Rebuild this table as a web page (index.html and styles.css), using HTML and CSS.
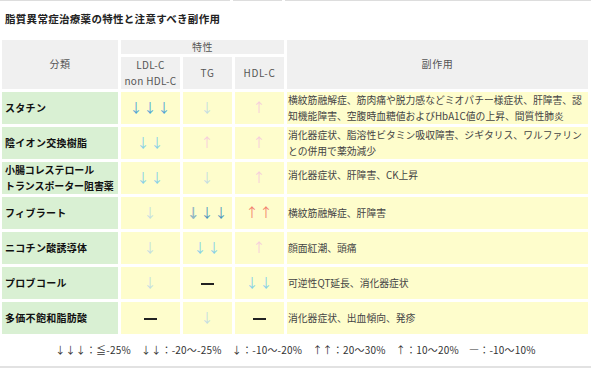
FILE: index.html
```html
<!DOCTYPE html>
<html lang="ja">
<head>
<meta charset="utf-8">
<link rel="stylesheet" href="styles.css">
</head>
<body>
<div class="prev">
  <span class="p1"></span><span class="p2"></span><span class="p3"></span>
</div>
<h1 class="title">脂質異常症治療薬の特性と注意すべき副作用</h1>
<table class="tbl">
  <colgroup>
    <col class="c1"><col class="c2"><col class="c3"><col class="c4"><col class="c5">
  </colgroup>
  <thead>
    <tr class="h1">
      <th rowspan="2">分類</th>
      <th colspan="3">特性</th>
      <th rowspan="2">副作用</th>
    </tr>
    <tr class="h2">
      <th class="two">LDL-C<br>non HDL-C</th>
      <th>TG</th>
      <th>HDL-C</th>
    </tr>
  </thead>
  <tbody>
    <tr>
      <td class="name">スタチン</td>
      <td class="v"><span class="a d3">↓↓↓</span></td>
      <td class="v"><span class="a d1">↓</span></td>
      <td class="v"><span class="a u1">↑</span></td>
      <td class="fx">横紋筋融解症、筋肉痛や脱力感などミオパチー様症状、肝障害、認知機能障害、空腹時血糖値およびHbA1C値の上昇、間質性肺炎</td>
    </tr>
    <tr>
      <td class="name">陰イオン交換樹脂</td>
      <td class="v"><span class="a d2">↓↓</span></td>
      <td class="v"><span class="a u1">↑</span></td>
      <td class="v"><span class="a u1">↑</span></td>
      <td class="fx">消化器症状、脂溶性ビタミン吸収障害、ジギタリス、ワルファリンとの併用で薬効減少</td>
    </tr>
    <tr>
      <td class="name two">小腸コレステロール<br>トランスポーター阻害薬</td>
      <td class="v"><span class="a d2">↓↓</span></td>
      <td class="v"><span class="a d1">↓</span></td>
      <td class="v"><span class="a u1">↑</span></td>
      <td class="fx top">消化器症状、肝障害、CK上昇</td>
    </tr>
    <tr>
      <td class="name">フィブラート</td>
      <td class="v"><span class="a d1">↓</span></td>
      <td class="v"><span class="a d3b"><span class="thick">↓</span>↓↓</span></td>
      <td class="v"><span class="a u2">↑↑</span></td>
      <td class="fx">横紋筋融解症、肝障害</td>
    </tr>
    <tr>
      <td class="name">ニコチン酸誘導体</td>
      <td class="v"><span class="a d1">↓</span></td>
      <td class="v"><span class="a d2">↓↓</span></td>
      <td class="v"><span class="a u1">↑</span></td>
      <td class="fx">顔面紅潮、頭痛</td>
    </tr>
    <tr>
      <td class="name">プロブコール</td>
      <td class="v"><span class="a d1">↓</span></td>
      <td class="v"><span class="dash"></span></td>
      <td class="v"><span class="a d2">↓↓</span></td>
      <td class="fx">可逆性QT延長、消化器症状</td>
    </tr>
    <tr>
      <td class="name">多価不飽和脂肪酸</td>
      <td class="v"><span class="dash"></span></td>
      <td class="v"><span class="a d1">↓</span></td>
      <td class="v"><span class="dash"></span></td>
      <td class="fx">消化器症状、出血傾向、発疹</td>
    </tr>
  </tbody>
</table>
<p class="legend">↓↓↓：≦-25%　↓↓：-20〜-25%　↓：-10〜-20%　↑↑：20〜30%　↑：10〜20%　―：-10〜10%</p>
<div class="bottom"></div>
</body>
</html>
```

FILE: styles.css
```css
html, body {
  margin: 0;
  padding: 0;
  background: #ffffff;
}
body {
  width: 591px;
  height: 368px;
  overflow: hidden;
  position: relative;
  font-family: "Noto Sans CJK JP", "Noto Sans", sans-serif;
  color: #333;
}
.prev {
  display: flex;
  height: 1px;
  gap: 3px;
}
.prev span {
  background: #dddddd;
  height: 1px;
}
.p1 { width: 230px; }
.p2 { width: 49px; }
.p3 { flex: 1; }
.title {
  margin: 10px 0 0 5px;
  font-size: 10.5px;
  line-height: 16px;
  font-weight: bold;
  color: #222;
  letter-spacing: 0.3px;
}
.tbl {
  margin: 9.5px 0 0 -1px;
  border-collapse: separate;
  border-spacing: 3px 3.5px;
  table-layout: fixed;
  width: 592px;
  font-size: 10px;
}
.c1 { width: 116px; }
.c2 { width: 59px; }
.c3 { width: 49px; }
.c4 { width: 49px; }
.c5 { width: 301px; }
.tbl th {
  background: #f0f0f0;
  color: #555;
  font-weight: normal;
  font-size: 10px;
  padding: 0;
  text-align: center;
  vertical-align: middle;
  letter-spacing: 0.6px;
}
.h1 th { height: 14px; line-height: 14px; }
.h2 th { height: 31px; line-height: 16px; }
.h2 th.two { letter-spacing: 0.3px; }
.tbl td {
  height: 32px;
  padding: 0;
  vertical-align: middle;
  overflow: hidden;
}
.tbl td.name {
  background: #d9f0d3;
  color: #111;
  font-weight: bold;
  font-size: 10px;
  padding-left: 3px;
  line-height: 16px;
  letter-spacing: 0.3px;
  white-space: nowrap;
}
.tbl td.name.two { letter-spacing: -0.1px; }
.v {
  background: #fefdcc;
  text-align: center;
}
.tbl td.fx {
  background: #fefdcc;
  color: #444;
  font-size: 9.8px;
  line-height: 16px;
  padding-left: 1px;
}
.tbl td.fx.top {
  vertical-align: top;
  padding-top: 5px;
  height: 27px;
}
.a {
  font-family: "Noto Sans CJK JP", sans-serif;
  font-size: 13px;
  line-height: 14px;
  letter-spacing: 1px;
}
.d3 { color: #4ea4d6; }
.d3b { color: #4b93bf; }
.d3b .thick { color: #8fb7c4; text-shadow: 0.6px 0 0 #8fb7c4; }
.d2 { color: #86d0e8; }
.d1 { color: #c4dde2; }
.u1 { color: #f6cfdc; }
.u2 { color: #f3806e; }
.dash {
  display: inline-block;
  width: 13px;
  height: 2px;
  background: #222;
  vertical-align: middle;
}
.legend {
  margin: 6px 0 0 0;
  text-align: center;
  font-size: 10px;
  line-height: 14px;
  color: #333;
  letter-spacing: 0.2px;
}
.bottom {
  position: absolute;
  left: 0;
  right: 0;
  top: 366px;
  height: 2px;
  background: #e2e2e2;
}
```
